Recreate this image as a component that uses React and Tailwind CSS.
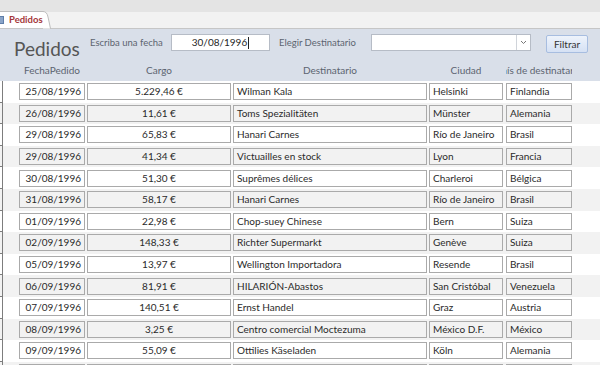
import React from "react";

const rows = [
  ["25/08/1996", "5.229,46 €", "Wilman Kala", "Helsinki", "Finlandia"],
  ["26/08/1996", "11,61 €", "Toms Spezialitäten", "Münster", "Alemania"],
  ["29/08/1996", "65,83 €", "Hanari Carnes", "Río de Janeiro", "Brasil"],
  ["29/08/1996", "41,34 €", "Victuailles en stock", "Lyon", "Francia"],
  ["30/08/1996", "51,30 €", "Suprêmes délices", "Charleroi", "Bélgica"],
  ["31/08/1996", "58,17 €", "Hanari Carnes", "Río de Janeiro", "Brasil"],
  ["01/09/1996", "22,98 €", "Chop-suey Chinese", "Bern", "Suiza"],
  ["02/09/1996", "148,33 €", "Richter Supermarkt", "Genève", "Suiza"],
  ["05/09/1996", "13,97 €", "Wellington Importadora", "Resende", "Brasil"],
  ["06/09/1996", "81,91 €", "HILARIÓN-Abastos", "San Cristóbal", "Venezuela"],
  ["07/09/1996", "140,51 €", "Ernst Handel", "Graz", "Austria"],
  ["08/09/1996", "3,25 €", "Centro comercial Moctezuma", "México D.F.", "México"],
  ["09/09/1996", "55,09 €", "Ottilies Käseladen", "Köln", "Alemania"],
  ["10/09/1996", "45,08 €", "Die Wandernde Kuh", "Stuttgart", "Alemania"],
];

function Cell({ w, align, children, grey, ml }) {
  return (
    <div
      className={`h-[17px] border border-[#aaaaaa] flex items-center px-[3px] whitespace-nowrap overflow-hidden text-[10px] text-[#2a2a2a] ${grey ? "bg-[#f2f2f2]" : "bg-white"} ${align}`}
      style={{ width: w, marginLeft: ml }}
    >
      {children}
    </div>
  );
}

export default function App() {
  return (
    <div className="w-[600px] h-[365px] overflow-hidden bg-white" style={{ fontFamily: "Lato, 'Open Sans', sans-serif" }}>
      {/* top strip */}
      <div className="h-[12px] bg-[#e4e4e4]" />
      {/* tab bar */}
      <div className="h-[17px] bg-[#f2f2f2] border-b border-[#c6c6c6] flex items-end">
        <div className="relative h-[17px] w-[44px] bg-white border-t border-[#bdbdbd] flex items-center">
          <div className="w-[5px] h-[8px] bg-[#8aa4c8] border border-[#5f7ea8] ml-[-1px]" />
          <span className="ml-[5px] text-[9.5px] font-bold text-[#a4373a] leading-none">Pedidos</span>
          <svg className="absolute right-[-8px] top-[-1px]" width="9" height="18" viewBox="0 0 9 18">
            <path d="M0 0.5 Q4 0.5 5 6 L7 17.5 L0 17.5 Z" fill="#ffffff" />
            <path d="M0 0.5 Q4 0.5 5 6 L7.5 17.5" fill="none" stroke="#bdbdbd" strokeWidth="1" />
          </svg>
        </div>
      </div>
      {/* header */}
      <div className="h-[52px] bg-[#d9dfe9]">
        <div className="h-[31px] flex items-start pt-[5px]">
          <div className="w-[90px] pl-[14px] text-[19px] leading-[22px] text-[#555555] mt-[4px]">Pedidos</div>
          <div className="w-[81px] text-[9.5px] text-[#5c6470] leading-[17px]">Escriba una fecha</div>
          <div className="relative w-[99px] h-[17px] bg-white border border-[#b6bcc6] flex items-center justify-center text-[10px] text-[#262626]">
            <span>30/08/1996</span>
            <span className="w-px h-[12px] bg-[#222] ml-[1px]" />
          </div>
          <div className="w-[101px] pl-[9px] text-[9.5px] text-[#5c6470] leading-[17px]">Elegir Destinatario</div>
          <div className="w-[160px] h-[17px] bg-white border border-[#b6bcc6] flex justify-end">
            <div className="w-[14px] h-full border-l border-[#d0d4da] flex items-center justify-center">
              <svg width="7" height="5" viewBox="0 0 7 5">
                <path d="M1 1 L3.5 3.5 L6 1" fill="none" stroke="#777" strokeWidth="1" />
              </svg>
            </div>
          </div>
          <div className="ml-[15px] mt-[1px] w-[42px] h-[18px] rounded-[2px] border border-[#a7bde0] bg-gradient-to-b from-[#eef3fb] to-[#d5e1f4] flex items-center justify-center text-[10px] text-[#333]">
            Filtrar
          </div>
        </div>
        <div className="h-[21px] flex items-center text-[10px] text-[#5c6470]">
          <div className="w-[19px]" />
          <div className="w-[66px] flex justify-center overflow-hidden whitespace-nowrap">FechaPedido</div>
          <div className="w-[144px] ml-[2px] flex justify-center overflow-hidden whitespace-nowrap">Cargo</div>
          <div className="w-[194px] ml-[2px] flex justify-center overflow-hidden whitespace-nowrap">Destinatario</div>
          <div className="w-[74px] ml-[2px] flex justify-center overflow-hidden whitespace-nowrap">Ciudad</div>
          <div className="w-[66px] ml-[3px] flex justify-center overflow-hidden whitespace-nowrap">País de destinatario</div>
        </div>
      </div>
      {/* rows */}
      {rows.map((r, i) => {
        const grey = i % 2 === 1;
        return (
          <div key={i} className={`h-[21.6px] flex items-center ${grey ? "bg-[#f2f2f2]" : "bg-white"}`}>
            <div className="w-[3px] h-full border-r border-b border-[#7d7d7d] self-stretch" />
            <Cell w={66} ml={16} align="justify-end" grey={grey}>{r[0]}</Cell>
            <Cell w={144} ml={2} align="justify-center" grey={grey}>{r[1]}</Cell>
            <Cell w={194} ml={2} align="justify-start" grey={grey}>{r[2]}</Cell>
            <Cell w={74} ml={2} align="justify-start" grey={grey}>{r[3]}</Cell>
            <Cell w={66} ml={3} align="justify-start" grey={grey}>{r[4]}</Cell>
          </div>
        );
      })}
    </div>
  );
}
